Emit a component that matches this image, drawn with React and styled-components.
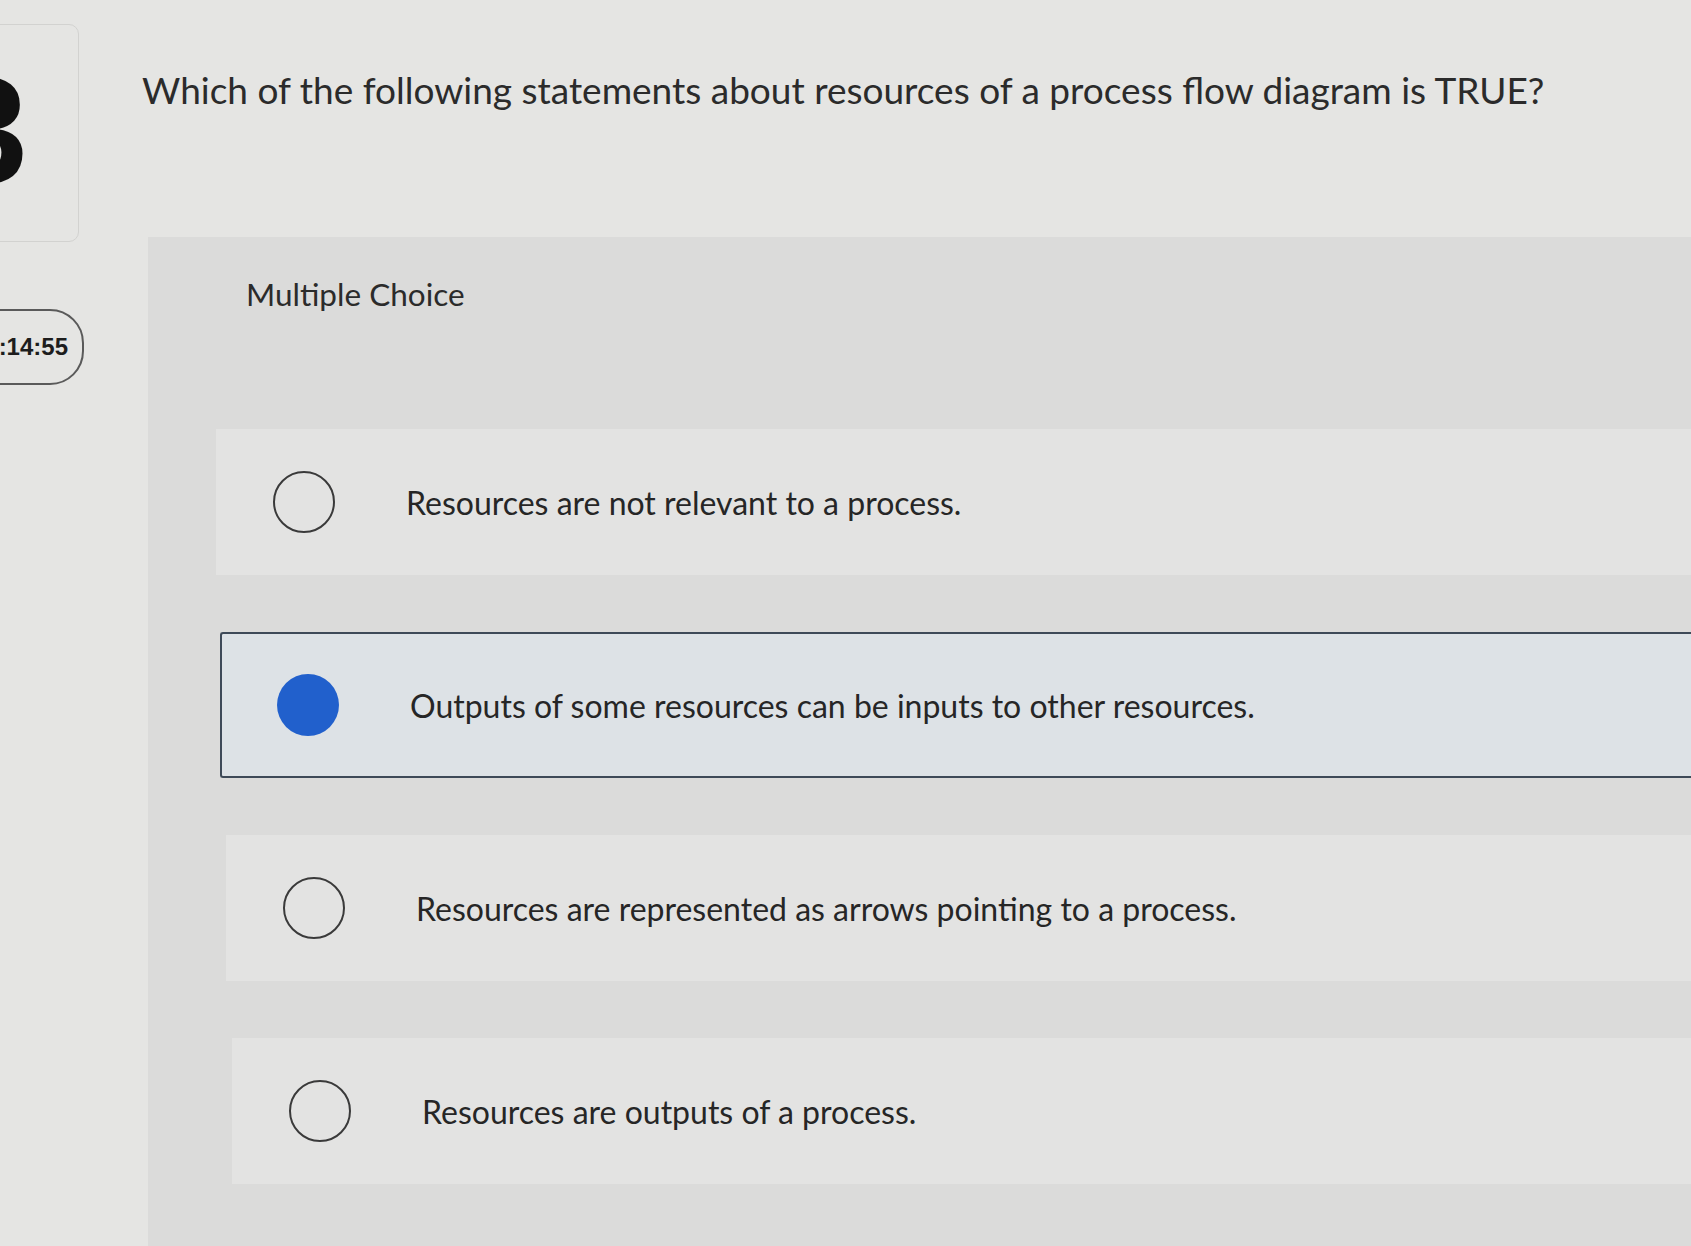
import React from 'react';
import styled, { createGlobalStyle } from 'styled-components';

const GlobalStyle = createGlobalStyle`
  html, body {
    margin: 0;
    padding: 0;
    background: #e5e5e3;
    overflow: hidden;
  }
  body {
    font-family: Lato, 'Open Sans', sans-serif;
    color: #2a2a2a;
  }
`

const Page = styled.div`
  width: 1691px;
  height: 1246px;
  display: flex;
  overflow: hidden;
`

const Sidebar = styled.div`
  width: 142px;
  flex-shrink: 0;
  display: flex;
  flex-direction: column;
  padding-top: 24px;
`

const NumberCard = styled.div`
  width: 160px;
  height: 218px;
  margin-left: -81px;
  box-sizing: border-box;
  border: 1.5px solid #d2d2d0;
  border-radius: 10px;
  display: flex;
  align-items: center;
  justify-content: flex-end;
  padding-right: 50px;
  overflow: hidden;
`

const Digit = styled.span`
  font-family: 'Liberation Sans', Arial, sans-serif;
  font-weight: 700;
  font-size: 150px;
  line-height: 1;
  color: #111;
  margin-top: -6px;
`

const Timer = styled.div`
  margin-top: 67px;
  width: 130px;
  height: 76px;
  margin-left: -46px;
  box-sizing: border-box;
  border: 2px solid #5a5a5a;
  border-radius: 0 34px 34px 0;
  display: flex;
  align-items: center;
  justify-content: flex-end;
  padding-right: 14px;
  font-family: 'Liberation Sans', Arial, sans-serif;
  font-weight: 700;
  font-size: 24px;
  color: #1d1d1d;
`

const Main = styled.div`
  flex: 1;
  display: flex;
  flex-direction: column;
  min-width: 0;
`

const Question = styled.h1`
  margin: 0;
  padding-top: 68px;
  height: 237px;
  box-sizing: border-box;
  font-weight: 400;
  font-size: 37px;
  line-height: 44px;
  color: #2b2b2b;
  white-space: nowrap;
`

const Panel = styled.div`
  flex: 1;
  margin-left: 6px;
  background: #dbdbda;
  display: flex;
  flex-direction: column;
  padding-top: 38px;
`

const Label = styled.div`
  margin-left: 98px;
  font-size: 31.5px;
  line-height: 38px;
  color: #2b2b2b;
  margin-bottom: 116px;
`

const Options = styled.div`
  display: flex;
  flex-direction: column;
  gap: 57px;
`

const Option = styled.label`
  height: 146px;
  margin-left: ${p => p.$indent}px;
  box-sizing: border-box;
  display: flex;
  align-items: center;
  background: ${p => (p.$selected ? '#dde2e6' : '#e3e3e2')};
  border: ${p => (p.$selected ? '2px solid #3e4a58' : '2px solid transparent')};
  border-right: none;
  border-radius: ${p => (p.$selected ? '3px 0 0 3px' : '0')};
  padding-left: 55px;
  cursor: pointer;
`

const Radio = styled.span`
  width: 62px;
  height: 62px;
  flex-shrink: 0;
  box-sizing: border-box;
  border-radius: 50%;
  border: ${p => (p.$checked ? 'none' : '2px solid #3a3a3a')};
  background: ${p => (p.$checked ? '#2160cc' : 'transparent')};
`

const OptionText = styled.span`
  margin-left: 71px;
  font-size: 32px;
  color: #262626;
  white-space: nowrap;
`

const options = [
  { text: 'Resources are not relevant to a process.', indent: 68 },
  { text: 'Outputs of some resources can be inputs to other resources.', indent: 72, selected: true },
  { text: 'Resources are represented as arrows pointing to a process.', indent: 78 },
  { text: 'Resources are outputs of a process.', indent: 84 },
];

function App() {
  return (
    <>
      <GlobalStyle />
      <Page>
        <Sidebar>
          <NumberCard>
            <Digit>3</Digit>
          </NumberCard>
          <Timer>:14:55</Timer>
        </Sidebar>
        <Main>
          <Question>
            Which of the following statements about resources of a process flow diagram is TRUE?
          </Question>
          <Panel>
            <Label>Multiple Choice</Label>
            <Options>
              {options.map(o => (
                <Option key={o.text} $indent={o.indent} $selected={o.selected}>
                  <Radio $checked={o.selected} />
                  <OptionText>{o.text}</OptionText>
                </Option>
              ))}
            </Options>
          </Panel>
        </Main>
      </Page>
    </>
  );
}

export default App;
